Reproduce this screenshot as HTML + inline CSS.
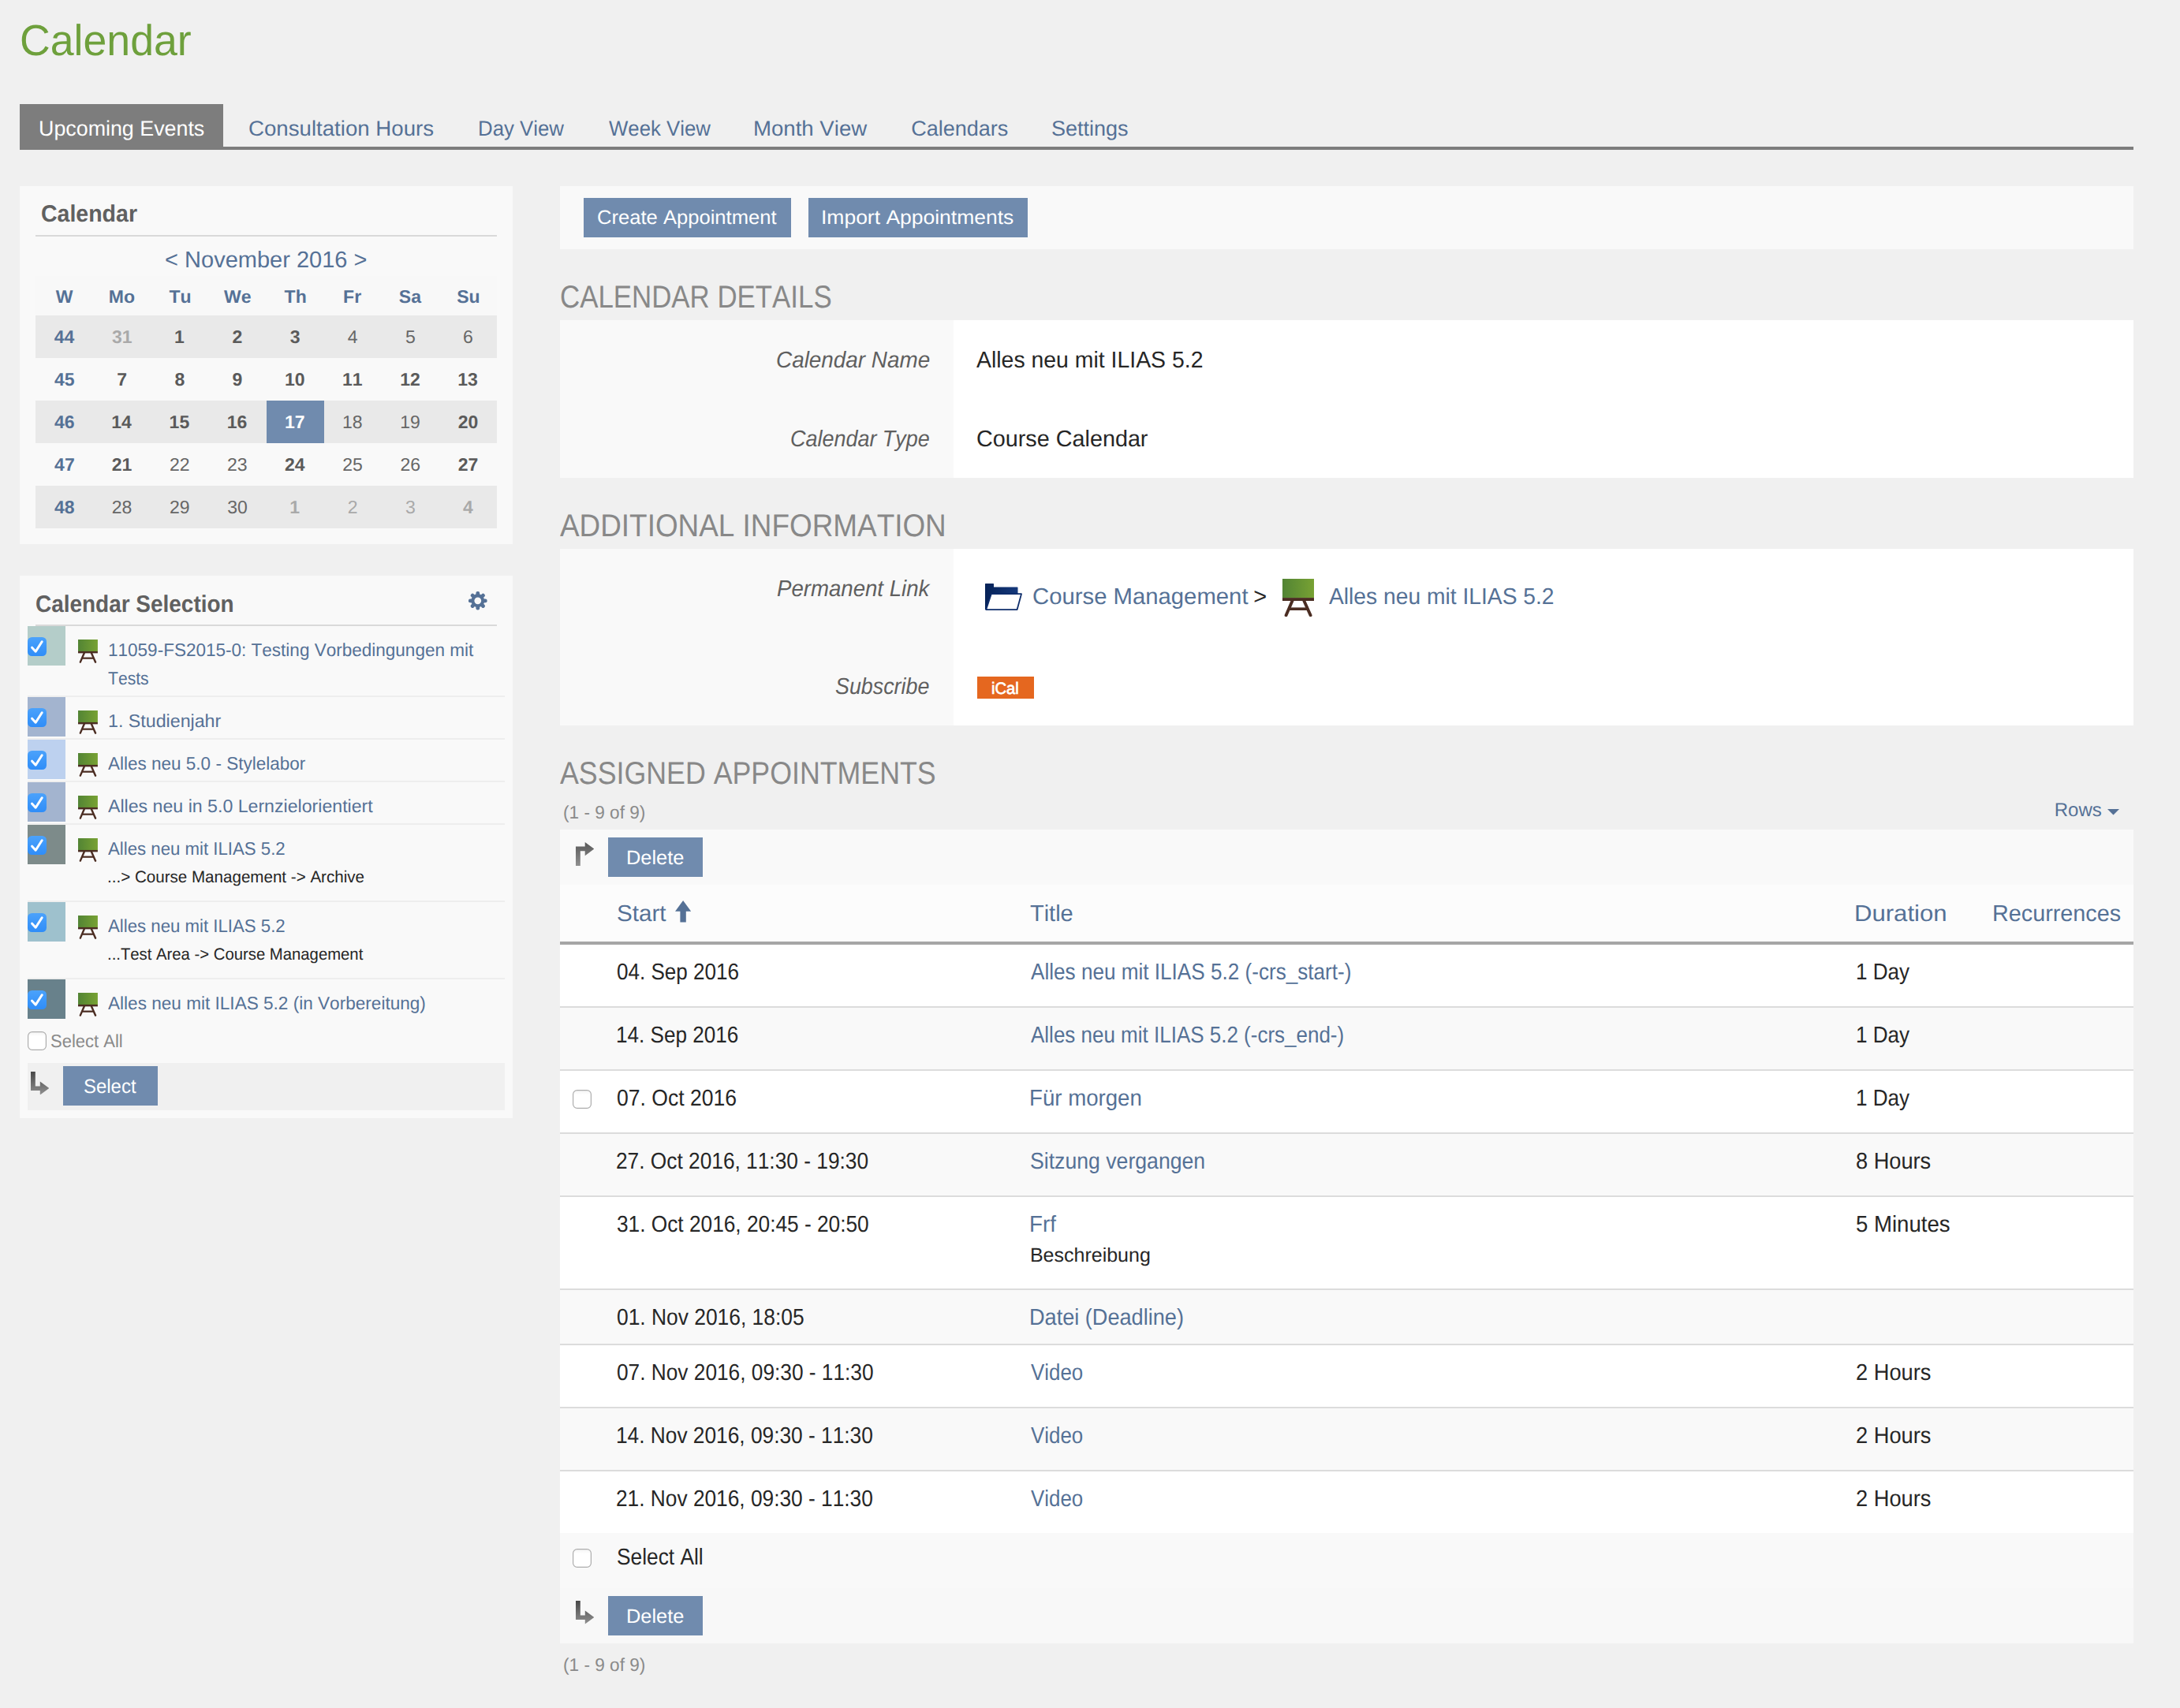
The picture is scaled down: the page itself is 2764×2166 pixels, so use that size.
<!DOCTYPE html>
<html><head><meta charset="utf-8"><title>Calendar</title>
<style>
html,body{margin:0;padding:0;}
body{width:2764px;height:2166px;background:#f0f0f0;position:relative;overflow:hidden;
font-family:"Liberation Sans",sans-serif;font-kerning:none;text-rendering:geometricPrecision;}
.r{position:absolute;display:block;}
.t{position:absolute;white-space:pre;line-height:1;display:block;transform-origin:0 0;}
</style></head><body>
<span class="t" style="left:25.02px;top:24px;font-size:55px;color:#6ea03c;transform:scaleX(0.9754);">Calendar</span>
<div class="r" style="left:25.0px;top:186.0px;width:2680.0px;height:4.0px;background:#7d7d7d;"></div>
<div class="r" style="left:25.0px;top:132.0px;width:258.0px;height:58.0px;background:#7d7d7d;"></div>
<span class="t" style="left:49.23px;top:150px;font-size:27px;color:#fff;transform:scaleX(0.9937);">Upcoming Events</span>
<span class="t" style="left:314.62px;top:150px;font-size:27px;color:#557196;transform:scaleX(1.0235);">Consultation Hours</span>
<span class="t" style="left:606.18px;top:150px;font-size:27px;color:#557196;transform:scaleX(0.9554);">Day View</span>
<span class="t" style="left:771.70px;top:150px;font-size:27px;color:#557196;transform:scaleX(0.9541);">Week View</span>
<span class="t" style="left:955.34px;top:150px;font-size:27px;color:#557196;transform:scaleX(1.0222);">Month View</span>
<span class="t" style="left:1155.25px;top:150px;font-size:27px;color:#557196;">Calendars</span>
<span class="t" style="left:1332.89px;top:150px;font-size:27px;color:#557196;">Settings</span>
<div class="r" style="left:25.0px;top:236.0px;width:625.0px;height:454.0px;background:#f9f9f9;"></div>
<span class="t" style="left:51.83px;top:257px;font-size:30px;color:#606060;transform:scaleX(0.9501);font-weight:bold;">Calendar</span>
<div class="r" style="left:45.0px;top:298.0px;width:585.0px;height:2.0px;background:#d9d9d9;"></div>
<span class="t" style="left:209.08px;top:316px;font-size:29px;color:#557196;">&lt; November 2016 &gt;</span>
<div class="r" style="left:45.0px;top:350.0px;width:585.0px;height:50.0px;background:#f8f8f8;"></div>
<span class="t" style="left:70.71px;top:365px;font-size:23px;color:#557196;font-weight:bold;">W</span>
<span class="t" style="left:137.77px;top:365px;font-size:23px;color:#557196;font-weight:bold;">Mo</span>
<span class="t" style="left:214.39px;top:365px;font-size:23px;color:#557196;font-weight:bold;">Tu</span>
<span class="t" style="left:284.07px;top:365px;font-size:23px;color:#557196;font-weight:bold;">We</span>
<span class="t" style="left:360.60px;top:365px;font-size:23px;color:#557196;font-weight:bold;">Th</span>
<span class="t" style="left:435.09px;top:365px;font-size:23px;color:#557196;font-weight:bold;">Fr</span>
<span class="t" style="left:505.85px;top:365px;font-size:23px;color:#557196;font-weight:bold;">Sa</span>
<span class="t" style="left:579.18px;top:365px;font-size:23px;color:#557196;font-weight:bold;">Su</span>
<div class="r" style="left:45.0px;top:400.0px;width:585.0px;height:54.0px;background:#e9e9e9;"></div>
<span class="t" style="left:68.66px;top:416px;font-size:23px;color:#557196;font-weight:bold;">44</span>
<span class="t" style="left:141.96px;top:416px;font-size:23px;color:#a9a9a9;font-weight:bold;">31</span>
<span class="t" style="left:221.02px;top:416px;font-size:23px;color:#5a5a5a;font-weight:bold;">1</span>
<span class="t" style="left:294.60px;top:416px;font-size:23px;color:#5a5a5a;font-weight:bold;">2</span>
<span class="t" style="left:367.82px;top:416px;font-size:23px;color:#5a5a5a;font-weight:bold;">3</span>
<span class="t" style="left:440.87px;top:416px;font-size:23px;color:#666666;">4</span>
<span class="t" style="left:513.93px;top:416px;font-size:23px;color:#666666;">5</span>
<span class="t" style="left:586.96px;top:416px;font-size:23px;color:#666666;">6</span>
<span class="t" style="left:68.91px;top:470px;font-size:23px;color:#557196;font-weight:bold;">45</span>
<span class="t" style="left:148.31px;top:470px;font-size:23px;color:#5a5a5a;font-weight:bold;">7</span>
<span class="t" style="left:221.41px;top:470px;font-size:23px;color:#5a5a5a;font-weight:bold;">8</span>
<span class="t" style="left:294.57px;top:470px;font-size:23px;color:#5a5a5a;font-weight:bold;">9</span>
<span class="t" style="left:361.02px;top:470px;font-size:23px;color:#5a5a5a;font-weight:bold;">10</span>
<span class="t" style="left:434.00px;top:470px;font-size:23px;color:#5a5a5a;font-weight:bold;">11</span>
<span class="t" style="left:507.26px;top:470px;font-size:23px;color:#5a5a5a;font-weight:bold;">12</span>
<span class="t" style="left:580.34px;top:470px;font-size:23px;color:#5a5a5a;font-weight:bold;">13</span>
<div class="r" style="left:45.0px;top:508.0px;width:585.0px;height:54.0px;background:#e9e9e9;"></div>
<span class="t" style="left:69.00px;top:524px;font-size:23px;color:#557196;font-weight:bold;">46</span>
<span class="t" style="left:141.24px;top:524px;font-size:23px;color:#5a5a5a;font-weight:bold;">14</span>
<span class="t" style="left:214.62px;top:524px;font-size:23px;color:#5a5a5a;font-weight:bold;">15</span>
<span class="t" style="left:287.84px;top:524px;font-size:23px;color:#5a5a5a;font-weight:bold;">16</span>
<div class="r" style="left:337.5px;top:508.0px;width:73.1px;height:54.0px;background:#708bae;"></div>
<span class="t" style="left:361.06px;top:524px;font-size:23px;color:#fff;font-weight:bold;">17</span>
<span class="t" style="left:434.02px;top:524px;font-size:23px;color:#666666;">18</span>
<span class="t" style="left:507.19px;top:524px;font-size:23px;color:#666666;">19</span>
<span class="t" style="left:580.72px;top:524px;font-size:23px;color:#5a5a5a;font-weight:bold;">20</span>
<span class="t" style="left:69.10px;top:578px;font-size:23px;color:#557196;font-weight:bold;">47</span>
<span class="t" style="left:141.82px;top:578px;font-size:23px;color:#5a5a5a;font-weight:bold;">21</span>
<span class="t" style="left:215.02px;top:578px;font-size:23px;color:#666666;">22</span>
<span class="t" style="left:288.07px;top:578px;font-size:23px;color:#666666;">23</span>
<span class="t" style="left:360.94px;top:578px;font-size:23px;color:#5a5a5a;font-weight:bold;">24</span>
<span class="t" style="left:434.30px;top:578px;font-size:23px;color:#666666;">25</span>
<span class="t" style="left:507.44px;top:578px;font-size:23px;color:#666666;">26</span>
<span class="t" style="left:580.75px;top:578px;font-size:23px;color:#5a5a5a;font-weight:bold;">27</span>
<div class="r" style="left:45.0px;top:616.0px;width:585.0px;height:54.0px;background:#e9e9e9;"></div>
<span class="t" style="left:68.95px;top:632px;font-size:23px;color:#557196;font-weight:bold;">48</span>
<span class="t" style="left:141.82px;top:632px;font-size:23px;color:#666666;">28</span>
<span class="t" style="left:214.99px;top:632px;font-size:23px;color:#666666;">29</span>
<span class="t" style="left:288.15px;top:632px;font-size:23px;color:#666666;">30</span>
<span class="t" style="left:367.27px;top:632px;font-size:23px;color:#a9a9a9;font-weight:bold;">1</span>
<span class="t" style="left:440.79px;top:632px;font-size:23px;color:#a9a9a9;">2</span>
<span class="t" style="left:513.98px;top:632px;font-size:23px;color:#a9a9a9;">3</span>
<span class="t" style="left:586.93px;top:632px;font-size:23px;color:#a9a9a9;font-weight:bold;">4</span>
<div class="r" style="left:25.0px;top:730.0px;width:625.0px;height:688.0px;background:#f9f9f9;"></div>
<span class="t" style="left:44.95px;top:752px;font-size:30px;color:#606060;transform:scaleX(0.9315);font-weight:bold;">Calendar Selection</span>
<svg class="r" style="left:594.15px;top:750.15px" width="23.60" height="23.60" viewBox="0 0 23.6 23.6"><g transform="translate(11.8,11.8)" fill="#557196"><circle r="8.50"/><rect x="-2.36" y="-11.80" width="4.72" height="5.90" rx="2.01" transform="rotate(0)"/><rect x="-2.36" y="-11.80" width="4.72" height="5.90" rx="2.01" transform="rotate(45)"/><rect x="-2.36" y="-11.80" width="4.72" height="5.90" rx="2.01" transform="rotate(90)"/><rect x="-2.36" y="-11.80" width="4.72" height="5.90" rx="2.01" transform="rotate(135)"/><rect x="-2.36" y="-11.80" width="4.72" height="5.90" rx="2.01" transform="rotate(180)"/><rect x="-2.36" y="-11.80" width="4.72" height="5.90" rx="2.01" transform="rotate(225)"/><rect x="-2.36" y="-11.80" width="4.72" height="5.90" rx="2.01" transform="rotate(270)"/><rect x="-2.36" y="-11.80" width="4.72" height="5.90" rx="2.01" transform="rotate(315)"/><circle r="4.37" fill="#f9f9f9"/></g></svg>
<div class="r" style="left:45.0px;top:792.0px;width:585.0px;height:2.0px;background:#d9d9d9;"></div>
<div class="r" style="left:35.0px;top:794.0px;width:48.0px;height:50.0px;background:#b4cdc9;"></div>
<svg class="r" style="left:35.10px;top:808.00px" width="24.00" height="24.00" viewBox="0 0 24 24"><defs><linearGradient id="c72" x1="0" x2="0" y1="0" y2="1"><stop offset="0" stop-color="#4ba2fb"/><stop offset="1" stop-color="#2f8df8"/></linearGradient></defs><rect x="0" y="0" width="24" height="24" rx="5.5" fill="url(#c72)"/><path d="M5.6 13.2 L10.2 18.2 L18.2 5.8" stroke="#fff" stroke-width="3" stroke-linecap="round" stroke-linejoin="round" fill="none"/></svg>
<svg class="r" style="left:99.10px;top:811.10px" width="24.92" height="30.01" viewBox="0 0 40.2 48.4"><defs><linearGradient id="g73" x1="0" x2="1" y1="0" y2="0"><stop offset="0" stop-color="#528434"/><stop offset="1" stop-color="#78a233"/></linearGradient></defs><rect x="0" y="0" width="40.2" height="24.3" fill="url(#g73)"/><rect x="0" y="24.1" width="40.2" height="3.9" fill="#4b2d22"/><path d="M12.5 28 L4.6 46.2 M27.4 28 L35.6 46.2" stroke="#4b2d22" stroke-width="3.9" stroke-linecap="round" fill="none"/><path d="M8.9 38.2 H31.2" stroke="#4b2d22" stroke-width="3.6" fill="none"/></svg>
<span class="t" style="left:136.59px;top:813px;font-size:23px;color:#557196;transform:scaleX(0.9792);">11059-FS2015-0: Testing Vorbedingungen mit</span>
<span class="t" style="left:137.04px;top:849px;font-size:23px;color:#557196;transform:scaleX(0.9180);">Tests</span>
<div class="r" style="left:35.0px;top:882.0px;width:605.0px;height:2.0px;background:#eeeeee;"></div>
<div class="r" style="left:35.0px;top:884.0px;width:48.0px;height:50.0px;background:#a3b4cf;"></div>
<svg class="r" style="left:35.10px;top:898.00px" width="24.00" height="24.00" viewBox="0 0 24 24"><defs><linearGradient id="c78" x1="0" x2="0" y1="0" y2="1"><stop offset="0" stop-color="#4ba2fb"/><stop offset="1" stop-color="#2f8df8"/></linearGradient></defs><rect x="0" y="0" width="24" height="24" rx="5.5" fill="url(#c78)"/><path d="M5.6 13.2 L10.2 18.2 L18.2 5.8" stroke="#fff" stroke-width="3" stroke-linecap="round" stroke-linejoin="round" fill="none"/></svg>
<svg class="r" style="left:99.10px;top:901.10px" width="24.92" height="30.01" viewBox="0 0 40.2 48.4"><defs><linearGradient id="g79" x1="0" x2="1" y1="0" y2="0"><stop offset="0" stop-color="#528434"/><stop offset="1" stop-color="#78a233"/></linearGradient></defs><rect x="0" y="0" width="40.2" height="24.3" fill="url(#g79)"/><rect x="0" y="24.1" width="40.2" height="3.9" fill="#4b2d22"/><path d="M12.5 28 L4.6 46.2 M27.4 28 L35.6 46.2" stroke="#4b2d22" stroke-width="3.9" stroke-linecap="round" fill="none"/><path d="M8.9 38.2 H31.2" stroke="#4b2d22" stroke-width="3.6" fill="none"/></svg>
<span class="t" style="left:136.54px;top:903px;font-size:23px;color:#557196;transform:scaleX(1.0093);">1. Studienjahr</span>
<div class="r" style="left:35.0px;top:936.0px;width:605.0px;height:2.0px;background:#eeeeee;"></div>
<div class="r" style="left:35.0px;top:938.0px;width:48.0px;height:50.0px;background:#bdd1ef;"></div>
<svg class="r" style="left:35.10px;top:952.00px" width="24.00" height="24.00" viewBox="0 0 24 24"><defs><linearGradient id="c83" x1="0" x2="0" y1="0" y2="1"><stop offset="0" stop-color="#4ba2fb"/><stop offset="1" stop-color="#2f8df8"/></linearGradient></defs><rect x="0" y="0" width="24" height="24" rx="5.5" fill="url(#c83)"/><path d="M5.6 13.2 L10.2 18.2 L18.2 5.8" stroke="#fff" stroke-width="3" stroke-linecap="round" stroke-linejoin="round" fill="none"/></svg>
<svg class="r" style="left:99.10px;top:955.10px" width="24.92" height="30.01" viewBox="0 0 40.2 48.4"><defs><linearGradient id="g84" x1="0" x2="1" y1="0" y2="0"><stop offset="0" stop-color="#528434"/><stop offset="1" stop-color="#78a233"/></linearGradient></defs><rect x="0" y="0" width="40.2" height="24.3" fill="url(#g84)"/><rect x="0" y="24.1" width="40.2" height="3.9" fill="#4b2d22"/><path d="M12.5 28 L4.6 46.2 M27.4 28 L35.6 46.2" stroke="#4b2d22" stroke-width="3.9" stroke-linecap="round" fill="none"/><path d="M8.9 38.2 H31.2" stroke="#4b2d22" stroke-width="3.6" fill="none"/></svg>
<span class="t" style="left:137.45px;top:957px;font-size:23px;color:#557196;transform:scaleX(0.9786);">Alles neu 5.0 - Stylelabor</span>
<div class="r" style="left:35.0px;top:990.0px;width:605.0px;height:2.0px;background:#eeeeee;"></div>
<div class="r" style="left:35.0px;top:992.0px;width:48.0px;height:50.0px;background:#a3b4cf;"></div>
<svg class="r" style="left:35.10px;top:1006.00px" width="24.00" height="24.00" viewBox="0 0 24 24"><defs><linearGradient id="c88" x1="0" x2="0" y1="0" y2="1"><stop offset="0" stop-color="#4ba2fb"/><stop offset="1" stop-color="#2f8df8"/></linearGradient></defs><rect x="0" y="0" width="24" height="24" rx="5.5" fill="url(#c88)"/><path d="M5.6 13.2 L10.2 18.2 L18.2 5.8" stroke="#fff" stroke-width="3" stroke-linecap="round" stroke-linejoin="round" fill="none"/></svg>
<svg class="r" style="left:99.10px;top:1009.10px" width="24.92" height="30.01" viewBox="0 0 40.2 48.4"><defs><linearGradient id="g89" x1="0" x2="1" y1="0" y2="0"><stop offset="0" stop-color="#528434"/><stop offset="1" stop-color="#78a233"/></linearGradient></defs><rect x="0" y="0" width="40.2" height="24.3" fill="url(#g89)"/><rect x="0" y="24.1" width="40.2" height="3.9" fill="#4b2d22"/><path d="M12.5 28 L4.6 46.2 M27.4 28 L35.6 46.2" stroke="#4b2d22" stroke-width="3.9" stroke-linecap="round" fill="none"/><path d="M8.9 38.2 H31.2" stroke="#4b2d22" stroke-width="3.6" fill="none"/></svg>
<span class="t" style="left:137.45px;top:1011px;font-size:23px;color:#557196;transform:scaleX(1.0062);">Alles neu in 5.0 Lernzielorientiert</span>
<div class="r" style="left:35.0px;top:1044.0px;width:605.0px;height:2.0px;background:#eeeeee;"></div>
<div class="r" style="left:35.0px;top:1046.0px;width:48.0px;height:50.0px;background:#7d8b8a;"></div>
<svg class="r" style="left:35.10px;top:1060.00px" width="24.00" height="24.00" viewBox="0 0 24 24"><defs><linearGradient id="c93" x1="0" x2="0" y1="0" y2="1"><stop offset="0" stop-color="#4ba2fb"/><stop offset="1" stop-color="#2f8df8"/></linearGradient></defs><rect x="0" y="0" width="24" height="24" rx="5.5" fill="url(#c93)"/><path d="M5.6 13.2 L10.2 18.2 L18.2 5.8" stroke="#fff" stroke-width="3" stroke-linecap="round" stroke-linejoin="round" fill="none"/></svg>
<svg class="r" style="left:99.10px;top:1063.10px" width="24.92" height="30.01" viewBox="0 0 40.2 48.4"><defs><linearGradient id="g94" x1="0" x2="1" y1="0" y2="0"><stop offset="0" stop-color="#528434"/><stop offset="1" stop-color="#78a233"/></linearGradient></defs><rect x="0" y="0" width="40.2" height="24.3" fill="url(#g94)"/><rect x="0" y="24.1" width="40.2" height="3.9" fill="#4b2d22"/><path d="M12.5 28 L4.6 46.2 M27.4 28 L35.6 46.2" stroke="#4b2d22" stroke-width="3.9" stroke-linecap="round" fill="none"/><path d="M8.9 38.2 H31.2" stroke="#4b2d22" stroke-width="3.6" fill="none"/></svg>
<span class="t" style="left:137.46px;top:1065px;font-size:23px;color:#557196;transform:scaleX(0.9656);">Alles neu mit ILIAS 5.2</span>
<span class="t" style="left:135.73px;top:1102px;font-size:21px;color:#262626;transform:scaleX(0.9800);">...&gt; Course Management -&gt; Archive</span>
<div class="r" style="left:35.0px;top:1142.0px;width:605.0px;height:2.0px;background:#eeeeee;"></div>
<div class="r" style="left:35.0px;top:1144.0px;width:48.0px;height:50.0px;background:#9ec1cd;"></div>
<svg class="r" style="left:35.10px;top:1158.00px" width="24.00" height="24.00" viewBox="0 0 24 24"><defs><linearGradient id="c99" x1="0" x2="0" y1="0" y2="1"><stop offset="0" stop-color="#4ba2fb"/><stop offset="1" stop-color="#2f8df8"/></linearGradient></defs><rect x="0" y="0" width="24" height="24" rx="5.5" fill="url(#c99)"/><path d="M5.6 13.2 L10.2 18.2 L18.2 5.8" stroke="#fff" stroke-width="3" stroke-linecap="round" stroke-linejoin="round" fill="none"/></svg>
<svg class="r" style="left:99.10px;top:1161.10px" width="24.92" height="30.01" viewBox="0 0 40.2 48.4"><defs><linearGradient id="g100" x1="0" x2="1" y1="0" y2="0"><stop offset="0" stop-color="#528434"/><stop offset="1" stop-color="#78a233"/></linearGradient></defs><rect x="0" y="0" width="40.2" height="24.3" fill="url(#g100)"/><rect x="0" y="24.1" width="40.2" height="3.9" fill="#4b2d22"/><path d="M12.5 28 L4.6 46.2 M27.4 28 L35.6 46.2" stroke="#4b2d22" stroke-width="3.9" stroke-linecap="round" fill="none"/><path d="M8.9 38.2 H31.2" stroke="#4b2d22" stroke-width="3.6" fill="none"/></svg>
<span class="t" style="left:137.46px;top:1163px;font-size:23px;color:#557196;transform:scaleX(0.9656);">Alles neu mit ILIAS 5.2</span>
<span class="t" style="left:135.75px;top:1200px;font-size:21px;color:#262626;transform:scaleX(0.9664);">...Test Area -&gt; Course Management</span>
<div class="r" style="left:35.0px;top:1240.0px;width:605.0px;height:2.0px;background:#eeeeee;"></div>
<div class="r" style="left:35.0px;top:1242.0px;width:48.0px;height:50.0px;background:#68818b;"></div>
<svg class="r" style="left:35.10px;top:1256.00px" width="24.00" height="24.00" viewBox="0 0 24 24"><defs><linearGradient id="c105" x1="0" x2="0" y1="0" y2="1"><stop offset="0" stop-color="#4ba2fb"/><stop offset="1" stop-color="#2f8df8"/></linearGradient></defs><rect x="0" y="0" width="24" height="24" rx="5.5" fill="url(#c105)"/><path d="M5.6 13.2 L10.2 18.2 L18.2 5.8" stroke="#fff" stroke-width="3" stroke-linecap="round" stroke-linejoin="round" fill="none"/></svg>
<svg class="r" style="left:99.10px;top:1259.10px" width="24.92" height="30.01" viewBox="0 0 40.2 48.4"><defs><linearGradient id="g106" x1="0" x2="1" y1="0" y2="0"><stop offset="0" stop-color="#528434"/><stop offset="1" stop-color="#78a233"/></linearGradient></defs><rect x="0" y="0" width="40.2" height="24.3" fill="url(#g106)"/><rect x="0" y="24.1" width="40.2" height="3.9" fill="#4b2d22"/><path d="M12.5 28 L4.6 46.2 M27.4 28 L35.6 46.2" stroke="#4b2d22" stroke-width="3.9" stroke-linecap="round" fill="none"/><path d="M8.9 38.2 H31.2" stroke="#4b2d22" stroke-width="3.6" fill="none"/></svg>
<span class="t" style="left:137.45px;top:1261px;font-size:23px;color:#557196;transform:scaleX(0.9817);">Alles neu mit ILIAS 5.2 (in Vorbereitung)</span>
<svg class="r" style="left:35.20px;top:1308.20px" width="24.00" height="24.00" viewBox="0 0 24 24"><defs><linearGradient id="e108" x1="0" x2="0" y1="0" y2="1"><stop offset="0" stop-color="#f4f4f4"/><stop offset="0.25" stop-color="#fff"/><stop offset="1" stop-color="#fff"/></linearGradient></defs><rect x="0.6" y="0.6" width="22.8" height="22.8" rx="5.2" fill="url(#e108)" stroke="#adadad" stroke-width="1.2"/></svg>
<span class="t" style="left:64.21px;top:1309px;font-size:23px;color:#8a8a8a;transform:scaleX(0.9559);">Select All</span>
<div class="r" style="left:35.0px;top:1348.0px;width:605.0px;height:60.0px;background:#f0f0f0;"></div>
<svg class="r" style="left:38.50px;top:1358.80px" width="23.50" height="29.50" viewBox="0 0 23.5 29.5"><defs><linearGradient id="a111" x1="0" x2="0" y1="0" y2="1"><stop offset="0" stop-color="#484848"/><stop offset="1" stop-color="#909090"/></linearGradient></defs><path d="M0 0 H5.8 V18.4 H11.8 V12.4 L23.5 21 L11.8 29.5 V24 H0 Z" fill="url(#a111)"/></svg>
<div class="r" style="left:80.0px;top:1352.0px;width:120.0px;height:50.0px;background:#708bae;"></div>
<span class="t" style="left:105.82px;top:1366px;font-size:25px;color:#fff;transform:scaleX(0.9578);">Select</span>
<div class="r" style="left:710.0px;top:236.0px;width:1995.0px;height:80.0px;background:#f9f9f9;"></div>
<div class="r" style="left:740.0px;top:251.0px;width:263.0px;height:50.0px;background:#708bae;"></div>
<span class="t" style="left:757.12px;top:264px;font-size:25px;color:#fff;transform:scaleX(1.0235);">Create Appointment</span>
<div class="r" style="left:1025.0px;top:251.0px;width:278.0px;height:50.0px;background:#708bae;"></div>
<span class="t" style="left:1040.76px;top:264px;font-size:25px;color:#fff;transform:scaleX(1.0591);">Import Appointments</span>
<span class="t" style="left:709.86px;top:357px;font-size:40px;color:#888888;transform:scaleX(0.8710);">CALENDAR DETAILS</span>
<div class="r" style="left:710.0px;top:406.0px;width:499.0px;height:200.0px;background:#f9f9f9;"></div>
<div class="r" style="left:1209.0px;top:406.0px;width:1496.0px;height:200.0px;background:#fff;"></div>
<span class="t" style="left:983.87px;top:443px;font-size:29px;color:#5f5f5f;transform:scaleX(0.9610);font-style:italic;">Calendar Name</span>
<span class="t" style="left:1237.94px;top:443px;font-size:29px;color:#262626;transform:scaleX(0.9799);">Alles neu mit ILIAS 5.2</span>
<span class="t" style="left:1002.22px;top:543px;font-size:29px;color:#5f5f5f;transform:scaleX(0.9294);font-style:italic;">Calendar Type</span>
<span class="t" style="left:1238.06px;top:543px;font-size:29px;color:#262626;transform:scaleX(0.9919);">Course Calendar</span>
<span class="t" style="left:709.93px;top:647px;font-size:40px;color:#888888;transform:scaleX(0.9221);">ADDITIONAL INFORMATION</span>
<div class="r" style="left:710.0px;top:696.0px;width:499.0px;height:224.0px;background:#f9f9f9;"></div>
<div class="r" style="left:1209.0px;top:696.0px;width:1496.0px;height:224.0px;background:#fff;"></div>
<span class="t" style="left:984.57px;top:733px;font-size:29px;color:#5f5f5f;transform:scaleX(0.9517);font-style:italic;">Permanent Link</span>
<svg class="r" style="left:1249.20px;top:739.90px" width="47.00" height="34.00" viewBox="0 0 47 34"><defs><linearGradient id="f130" x1="0" x2="1" y1="0" y2="0"><stop offset="0" stop-color="#062257"/><stop offset="1" stop-color="#15397c"/></linearGradient></defs><path d="M0 0.6 Q0 0 0.6 0 H10.4 Q11 0 11 0.6 V4.4 H40.9 Q41.5 4.4 41.5 5 V13 H8 L1.5 33 H0 Z" fill="url(#f130)"/><path d="M7.8 13.2 H46 L40.6 33.1 H1.2 Z" fill="#fff" stroke="#0e2d6b" stroke-width="1.8" stroke-linejoin="round"/></svg>
<span class="t" style="left:1309.34px;top:743px;font-size:29px;color:#557196;transform:scaleX(1.0100);">Course Management</span>
<span class="t" style="left:1589.18px;top:743px;font-size:29px;color:#262626;">&gt;</span>
<svg class="r" style="left:1625.90px;top:733.90px" width="40.20" height="48.40" viewBox="0 0 40.2 48.4"><defs><linearGradient id="g133" x1="0" x2="1" y1="0" y2="0"><stop offset="0" stop-color="#528434"/><stop offset="1" stop-color="#78a233"/></linearGradient></defs><rect x="0" y="0" width="40.2" height="24.3" fill="url(#g133)"/><rect x="0" y="24.1" width="40.2" height="3.9" fill="#4b2d22"/><path d="M12.5 28 L4.6 46.2 M27.4 28 L35.6 46.2" stroke="#4b2d22" stroke-width="3.9" stroke-linecap="round" fill="none"/><path d="M8.9 38.2 H31.2" stroke="#4b2d22" stroke-width="3.6" fill="none"/></svg>
<span class="t" style="left:1685.24px;top:743px;font-size:29px;color:#557196;transform:scaleX(0.9734);">Alles neu mit ILIAS 5.2</span>
<span class="t" style="left:1059.25px;top:857px;font-size:29px;color:#5f5f5f;transform:scaleX(0.9254);font-style:italic;">Subscribe</span>
<div class="r" style="left:1239.1px;top:858.2px;width:71.7px;height:27.6px;background:#e5671f;"></div>
<span class="t" style="left:1256.77px;top:863px;font-size:21px;color:#fff;transform:scaleX(0.9614);-webkit-text-stroke:0.7px #fff;">iCal</span>
<span class="t" style="left:709.93px;top:961px;font-size:40px;color:#888888;transform:scaleX(0.8936);">ASSIGNED APPOINTMENTS</span>
<span class="t" style="left:714.30px;top:1019px;font-size:23px;color:#8a8a8a;transform:scaleX(0.9831);">(1 - 9 of 9)</span>
<span class="t" style="left:2604.73px;top:1016px;font-size:24px;color:#557196;">Rows</span>
<svg class="r" style="left:2672.00px;top:1026.30px" width="15.00" height="7.50" viewBox="0 0 15 7.5"><path d="M0 0 H15 L7.5 7.5 Z" fill="#557196"/></svg>
<div class="r" style="left:710.0px;top:1052.0px;width:1995.0px;height:70.0px;background:#f9f9f9;"></div>
<svg class="r" style="left:730.00px;top:1068.00px" width="23.30" height="30.00" viewBox="0 0 23.3 30"><defs><linearGradient id="a143" x1="0" x2="0" y1="0" y2="1"><stop offset="0" stop-color="#585858"/><stop offset="1" stop-color="#909090"/></linearGradient></defs><path d="M0 30 V5.6 H11.7 V0 L23.3 8.4 L11.7 17.2 V11.2 H5.8 V30 Z" fill="url(#a143)"/></svg>
<div class="r" style="left:771.0px;top:1062.0px;width:120.0px;height:50.0px;background:#708bae;"></div>
<span class="t" style="left:793.72px;top:1076px;font-size:25px;color:#fff;transform:scaleX(1.0159);">Delete</span>
<div class="r" style="left:710.0px;top:1122.0px;width:1995.0px;height:72.0px;background:#fcfcfc;"></div>
<div class="r" style="left:710.0px;top:1194.0px;width:1995.0px;height:4.0px;background:#a6a6a6;"></div>
<span class="t" style="left:781.67px;top:1145px;font-size:29px;color:#557196;transform:scaleX(1.0211);">Start</span>
<svg class="r" style="left:856.20px;top:1142.30px" width="20.20" height="27.50" viewBox="0 0 20.2 27.5"><path d="M10.1 0 L20.2 13.8 H13.8 V27.5 H6.4 V13.8 H0 Z" fill="#557196"/></svg>
<span class="t" style="left:1305.96px;top:1145px;font-size:29px;color:#557196;">Title</span>
<span class="t" style="left:2351.45px;top:1145px;font-size:29px;color:#557196;transform:scaleX(1.0725);">Duration</span>
<span class="t" style="left:2526.34px;top:1145px;font-size:29px;color:#557196;transform:scaleX(0.9916);">Recurrences</span>
<div class="r" style="left:710.0px;top:1198.0px;width:1995.0px;height:746.0px;background:#dcdcdc;"></div>
<div class="r" style="left:710.0px;top:1198.0px;width:1995.0px;height:78.0px;background:#fff;"></div>
<span class="t" style="left:781.68px;top:1219px;font-size:29px;color:#262626;transform:scaleX(0.8981);">04. Sep 2016</span>
<span class="t" style="left:1306.95px;top:1219px;font-size:29px;color:#557196;transform:scaleX(0.9008);">Alles neu mit ILIAS 5.2 (-crs_start-)</span>
<span class="t" style="left:2352.52px;top:1219px;font-size:29px;color:#262626;transform:scaleX(0.8981);">1 Day</span>
<div class="r" style="left:710.0px;top:1278.0px;width:1995.0px;height:78.0px;background:#f9f9f9;"></div>
<span class="t" style="left:781.42px;top:1299px;font-size:29px;color:#262626;transform:scaleX(0.8996);">14. Sep 2016</span>
<span class="t" style="left:1306.95px;top:1299px;font-size:29px;color:#557196;transform:scaleX(0.8961);">Alles neu mit ILIAS 5.2 (-crs_end-)</span>
<span class="t" style="left:2352.52px;top:1299px;font-size:29px;color:#262626;transform:scaleX(0.8981);">1 Day</span>
<div class="r" style="left:710.0px;top:1358.0px;width:1995.0px;height:78.0px;background:#fff;"></div>
<span class="t" style="left:781.66px;top:1379px;font-size:29px;color:#262626;transform:scaleX(0.9152);">07. Oct 2016</span>
<span class="t" style="left:1304.73px;top:1379px;font-size:29px;color:#557196;transform:scaleX(0.9530);">Für morgen</span>
<span class="t" style="left:2352.52px;top:1379px;font-size:29px;color:#262626;transform:scaleX(0.8981);">1 Day</span>
<div class="r" style="left:710.0px;top:1438.0px;width:1995.0px;height:78.0px;background:#f9f9f9;"></div>
<span class="t" style="left:781.39px;top:1459px;font-size:29px;color:#262626;transform:scaleX(0.9064);">27. Oct 2016, 11:30 - 19:30</span>
<span class="t" style="left:1305.80px;top:1459px;font-size:29px;color:#557196;transform:scaleX(0.9185);">Sitzung vergangen</span>
<span class="t" style="left:2353.33px;top:1459px;font-size:29px;color:#262626;transform:scaleX(0.9371);">8 Hours</span>
<div class="r" style="left:710.0px;top:1518.0px;width:1995.0px;height:116.0px;background:#fff;"></div>
<span class="t" style="left:781.70px;top:1539px;font-size:29px;color:#262626;transform:scaleX(0.9055);">31. Oct 2016, 20:45 - 20:50</span>
<span class="t" style="left:1304.72px;top:1539px;font-size:29px;color:#557196;transform:scaleX(0.9572);">Frf</span>
<span class="t" style="left:2353.40px;top:1539px;font-size:29px;color:#262626;transform:scaleX(0.9513);">5 Minutes</span>
<span class="t" style="left:1305.95px;top:1580px;font-size:25px;color:#262626;">Beschreibung</span>
<div class="r" style="left:710.0px;top:1636.0px;width:1995.0px;height:68.0px;background:#f9f9f9;"></div>
<span class="t" style="left:781.67px;top:1657px;font-size:29px;color:#262626;transform:scaleX(0.9098);">01. Nov 2016, 18:05</span>
<span class="t" style="left:1304.78px;top:1657px;font-size:29px;color:#557196;transform:scaleX(0.9351);">Datei (Deadline)</span>
<div class="r" style="left:710.0px;top:1706.0px;width:1995.0px;height:78.0px;background:#fff;"></div>
<span class="t" style="left:781.68px;top:1727px;font-size:29px;color:#262626;transform:scaleX(0.9055);">07. Nov 2016, 09:30 - 11:30</span>
<span class="t" style="left:1306.90px;top:1727px;font-size:29px;color:#557196;transform:scaleX(0.8923);">Video</span>
<span class="t" style="left:2353.14px;top:1727px;font-size:29px;color:#262626;transform:scaleX(0.9391);">2 Hours</span>
<div class="r" style="left:710.0px;top:1786.0px;width:1995.0px;height:78.0px;background:#f9f9f9;"></div>
<span class="t" style="left:781.40px;top:1807px;font-size:29px;color:#262626;transform:scaleX(0.9062);">14. Nov 2016, 09:30 - 11:30</span>
<span class="t" style="left:1306.90px;top:1807px;font-size:29px;color:#557196;transform:scaleX(0.8923);">Video</span>
<span class="t" style="left:2353.14px;top:1807px;font-size:29px;color:#262626;transform:scaleX(0.9391);">2 Hours</span>
<div class="r" style="left:710.0px;top:1866.0px;width:1995.0px;height:78.0px;background:#fff;"></div>
<span class="t" style="left:781.39px;top:1887px;font-size:29px;color:#262626;transform:scaleX(0.9063);">21. Nov 2016, 09:30 - 11:30</span>
<span class="t" style="left:1306.90px;top:1887px;font-size:29px;color:#557196;transform:scaleX(0.8923);">Video</span>
<span class="t" style="left:2353.14px;top:1887px;font-size:29px;color:#262626;transform:scaleX(0.9391);">2 Hours</span>
<svg class="r" style="left:726.00px;top:1382.00px" width="24.00" height="24.00" viewBox="0 0 24 24"><defs><linearGradient id="e190" x1="0" x2="0" y1="0" y2="1"><stop offset="0" stop-color="#f4f4f4"/><stop offset="0.25" stop-color="#fff"/><stop offset="1" stop-color="#fff"/></linearGradient></defs><rect x="0.6" y="0.6" width="22.8" height="22.8" rx="5.2" fill="url(#e190)" stroke="#adadad" stroke-width="1.2"/></svg>
<div class="r" style="left:710.0px;top:1944.0px;width:1995.0px;height:70.0px;background:#f9f9f9;"></div>
<svg class="r" style="left:726.00px;top:1964.00px" width="24.00" height="24.00" viewBox="0 0 24 24"><defs><linearGradient id="e192" x1="0" x2="0" y1="0" y2="1"><stop offset="0" stop-color="#f4f4f4"/><stop offset="0.25" stop-color="#fff"/><stop offset="1" stop-color="#fff"/></linearGradient></defs><rect x="0.6" y="0.6" width="22.8" height="22.8" rx="5.2" fill="url(#e192)" stroke="#adadad" stroke-width="1.2"/></svg>
<span class="t" style="left:781.82px;top:1961px;font-size:29px;color:#262626;transform:scaleX(0.9069);">Select All</span>
<div class="r" style="left:710.0px;top:2014.0px;width:1995.0px;height:70.0px;background:#f8f8f8;"></div>
<svg class="r" style="left:729.50px;top:2030.30px" width="23.50" height="29.50" viewBox="0 0 23.5 29.5"><defs><linearGradient id="a195" x1="0" x2="0" y1="0" y2="1"><stop offset="0" stop-color="#484848"/><stop offset="1" stop-color="#909090"/></linearGradient></defs><path d="M0 0 H5.8 V18.4 H11.8 V12.4 L23.5 21 L11.8 29.5 V24 H0 Z" fill="url(#a195)"/></svg>
<div class="r" style="left:771.0px;top:2024.0px;width:120.0px;height:50.0px;background:#708bae;"></div>
<span class="t" style="left:793.72px;top:2038px;font-size:25px;color:#fff;transform:scaleX(1.0159);">Delete</span>
<span class="t" style="left:714.30px;top:2100px;font-size:23px;color:#8a8a8a;transform:scaleX(0.9831);">(1 - 9 of 9)</span>
</body></html>
